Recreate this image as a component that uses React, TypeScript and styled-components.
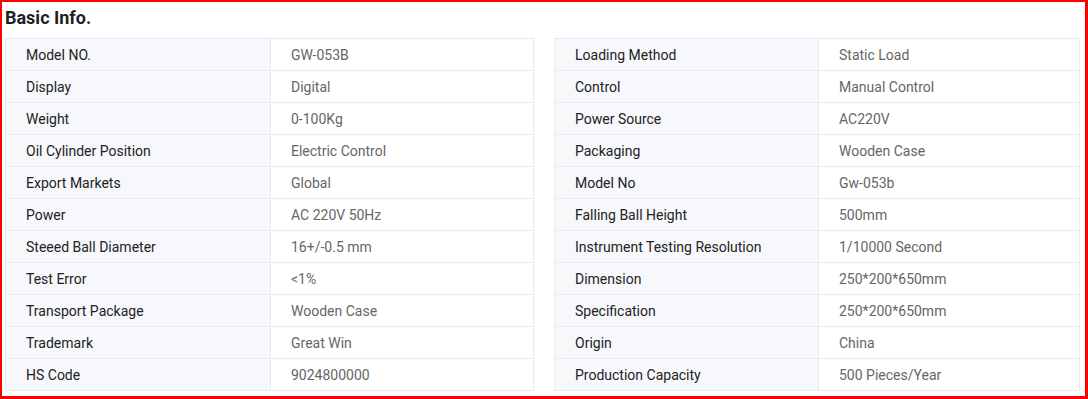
import styled, { createGlobalStyle } from "styled-components";

const GlobalStyle = createGlobalStyle`
  html, body {
    margin: 0;
    padding: 0;
    background: #fff;
  }
  body {
    font-family: Roboto, "Liberation Sans", Arial, sans-serif;
  }
`;

const Frame = styled.div`
  box-sizing: border-box;
  width: 1088px;
  height: 399px;
  border: 2px solid #ff0000;
  border-right-width: 3px;
  border-bottom-width: 3px;
  padding: 0 5px 0 3px;
`;

const Title = styled.h2`
  margin: 0;
  height: 36px;
  padding-top: 4px;
  box-sizing: border-box;
  font-size: 18px;
  font-weight: 700;
  line-height: 24px;
  color: #1f1f1f;
`;

const Tables = styled.div`
  display: grid;
  grid-template-columns: 529px 526px;
  column-gap: 20px;
`;

const Table = styled.div<{ $keyWidth: number }>`
  display: grid;
  grid-template-columns: ${(p) => p.$keyWidth}px 1fr;
  border-top: 1px solid #e6ebf2;
  border-left: 1px solid #e6ebf2;
`;

const Cell = styled.div<{ $key?: boolean }>`
  height: 32px;
  box-sizing: border-box;
  padding-left: 20px;
  display: flex;
  align-items: center;
  font-size: 14px;
  background: ${(p) => (p.$key ? "#f7f8fb" : "#fff")};
  color: ${(p) => (p.$key ? "#222" : "#666")};
  border-right: 1px solid #e6ebf2;
  border-bottom: 1px solid #e6ebf2;
  white-space: nowrap;
`;

const left: [string, string][] = [
  ["Model NO.", "GW-053B"],
  ["Display", "Digital"],
  ["Weight", "0-100Kg"],
  ["Oil Cylinder Position", "Electric Control"],
  ["Export Markets", "Global"],
  ["Power", "AC 220V 50Hz"],
  ["Steeed Ball Diameter", "16+/-0.5 mm"],
  ["Test Error", "<1%"],
  ["Transport Package", "Wooden Case"],
  ["Trademark", "Great Win"],
  ["HS Code", "9024800000"],
];

const right: [string, string][] = [
  ["Loading Method", "Static Load"],
  ["Control", "Manual Control"],
  ["Power Source", "AC220V"],
  ["Packaging", "Wooden Case"],
  ["Model No", "Gw-053b"],
  ["Falling Ball Height", "500mm"],
  ["Instrument Testing Resolution", "1/10000 Second"],
  ["Dimension", "250*200*650mm"],
  ["Specification", "250*200*650mm"],
  ["Origin", "China"],
  ["Production Capacity", "500 Pieces/Year"],
];

const InfoTable = ({
  rows,
  keyWidth,
}: {
  rows: [string, string][];
  keyWidth: number;
}) => (
  <Table $keyWidth={keyWidth}>
    {rows.map(([k, v]) => [
      <Cell $key key={k + "-k"}>
        {k}
      </Cell>,
      <Cell key={k + "-v"}>{v}</Cell>,
    ])}
  </Table>
);

export default function App() {
  return (
    <>
      <GlobalStyle />
      <Frame>
        <Title>Basic Info.</Title>
        <Tables>
          <InfoTable rows={left} keyWidth={265} />
          <InfoTable rows={right} keyWidth={264} />
        </Tables>
      </Frame>
    </>
  );
}
